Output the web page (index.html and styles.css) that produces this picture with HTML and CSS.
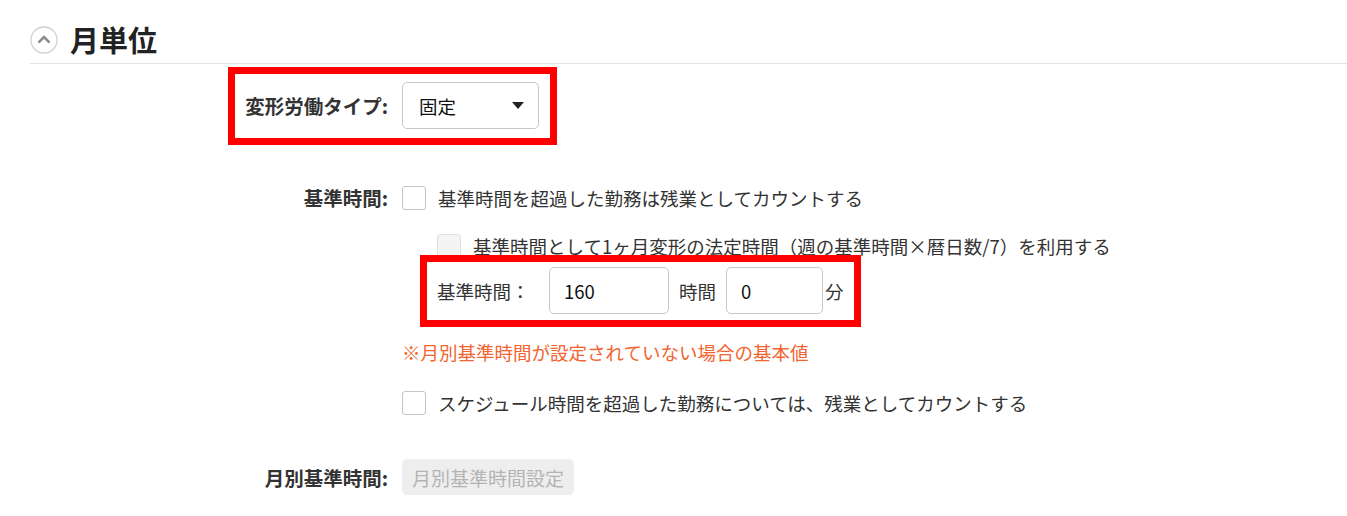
FILE: index.html
```html
<!DOCTYPE html>
<html lang="ja">
<head>
  <meta charset="UTF-8">
  <meta name="viewport" content="width=device-width, initial-scale=1.0">
  <title>月単位</title>
  <link rel="stylesheet" href="styles.css">
</head>
<body>
  <!-- Section header -->
  <div class="section-head">
    <svg class="toggle-icon" width="28" height="28" viewBox="0 0 28 28">
      <circle cx="14" cy="14" r="13" fill="#fff" stroke="#d0d0d0" stroke-width="1.3"/>
      <polyline points="9.2,15.8 14,11 18.8,15.8" fill="none" stroke="#8c8c8c" stroke-width="2.6" stroke-linecap="round" stroke-linejoin="round"/>
    </svg>
    <h2 class="section-title">月単位</h2>
  </div>

  <div class="form">
    <!-- Work type -->
    <div class="field-row marked type-row">
      <label class="field-label">変形労働タイプ:</label>
      <div class="select-box">
        <span>固定</span>
        <span class="caret"></span>
      </div>
    </div>

    <!-- Base hours -->
    <div class="field-row top base-row">
      <label class="field-label line">基準時間:</label>
      <div class="field-body">
        <label class="check-line">
          <span class="checkbox"></span>
          <span>基準時間を超過した勤務は残業としてカウントする</span>
        </label>
        <label class="check-line sub">
          <span class="checkbox disabled"></span>
          <span>基準時間として1ヶ月変形の法定時間（週の基準時間×暦日数/7）を利用する</span>
        </label>
        <div class="hours-box marked">
          <span class="hours-label">基準時間：</span>
          <input class="num-input hours" type="text" value="160">
          <span class="unit">時間</span>
          <input class="num-input minutes" type="text" value="0">
          <span class="unit last">分</span>
        </div>
        <p class="note">※月別基準時間が設定されていない場合の基本値</p>
        <label class="check-line schedule">
          <span class="checkbox"></span>
          <span>スケジュール時間を超過した勤務については、残業としてカウントする</span>
        </label>
      </div>
    </div>

    <!-- Monthly base hours -->
    <div class="field-row monthly-row">
      <label class="field-label">月別基準時間:</label>
      <button class="btn-disabled" disabled>月別基準時間設定</button>
    </div>
  </div>
</body>
</html>
```

FILE: styles.css
```css
body {
  margin: 0;
  background: #fff;
  color: #333;
  font-family: "Noto Sans CJK JP", "Noto Sans", sans-serif;
  font-size: 18.5px;
}

.section-head {
  display: flex;
  align-items: center;
  margin-left: 30px;
  padding: 20px 0 4px;
  border-bottom: 1px solid #e2e2e2;
}
.toggle-icon {
  margin-right: 12px;
}
.section-title {
  margin: 0;
  font-size: 29px;
  line-height: 39px;
  font-weight: bold;
  color: #222;
}

.form {
  padding-left: 240px;
}
.field-row {
  display: flex;
  align-items: center;
}
.field-row.top {
  align-items: flex-start;
}
.field-label {
  flex-shrink: 0;
  width: 148px;
  margin-right: 14px;
  text-align: right;
  font-size: 19.5px;
  font-weight: bold;
  color: #333;
  white-space: nowrap;
}
.field-label.line {
  line-height: 24px;
}

/* red highlight frame */
.marked {
  border: 7px solid #f00;
}

.type-row {
  width: fit-content;
  margin: 3px 0 0 -12px;
  padding: 8px 11px 9px 5px;
}
.select-box {
  display: flex;
  align-items: center;
  justify-content: space-between;
  box-sizing: border-box;
  width: 137px;
  height: 47px;
  padding: 0 14px 0 16px;
  border: 1px solid #c8c8c8;
  border-radius: 5px;
  color: #111;
}
.caret {
  width: 0;
  height: 0;
  border-left: 6px solid transparent;
  border-right: 6px solid transparent;
  border-top: 7px solid #222;
}

.base-row {
  margin-top: 41px;
}
.field-body {
  display: flex;
  flex-direction: column;
  align-items: flex-start;
}
.check-line {
  display: flex;
  align-items: center;
  height: 24px;
  line-height: 24px;
  white-space: nowrap;
}
.check-line.sub {
  margin: 24px 0 0 35px;
}
.checkbox {
  flex-shrink: 0;
  box-sizing: border-box;
  width: 24px;
  height: 24px;
  margin-right: 12px;
  border: 1px solid #c4c4c4;
  border-radius: 3px;
  background: #fff;
}
.checkbox.disabled {
  border-color: #e0e0e0;
  background: #f4f4f4;
}

.hours-box {
  display: flex;
  align-items: center;
  margin: -3px 0 0 18px;
  padding: 5px 0 6px 10px;
}
.hours-label {
  width: 112px;
}
.num-input {
  box-sizing: border-box;
  height: 47px;
  padding: 0 14px;
  border: 1px solid #c8c8c8;
  border-radius: 5px;
  font: inherit;
  color: #111;
  background: #fff;
}
.num-input.hours {
  width: 120px;
}
.num-input.minutes {
  width: 97px;
}
.unit {
  width: 57px;
  text-align: center;
}
.unit.last {
  width: auto;
  padding: 0 10px 0 2px;
}

.note {
  margin: 12px 0 0;
  line-height: 26px;
  color: #f26430;
}
.check-line.schedule {
  margin-top: 26px;
}

.monthly-row {
  margin-top: 44px;
}
.btn-disabled {
  height: 36px;
  padding: 0 10px;
  border: none;
  border-radius: 5px;
  background: #eeeeee;
  color: #b4b4b4;
  font-family: inherit;
  font-size: 19px;
}
```
